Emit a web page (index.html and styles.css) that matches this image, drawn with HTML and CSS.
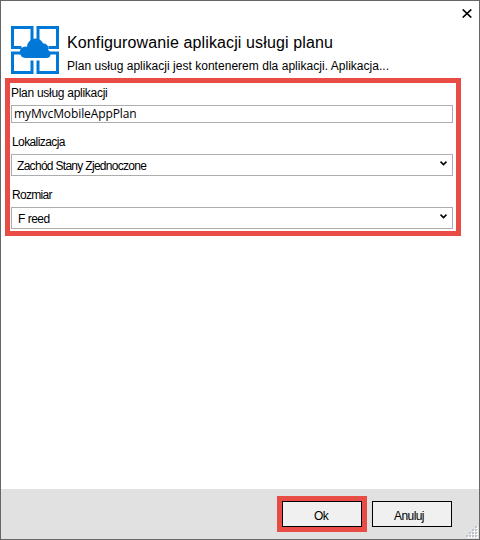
FILE: index.html
```html
<!DOCTYPE html>
<html lang="pl">
<head>
<meta charset="utf-8">
<title>Konfigurowanie aplikacji usługi planu</title>
<link rel="stylesheet" href="styles.css">
</head>
<body>
<main class="dialog">
  <button class="close" aria-label="Zamknij"><svg width="10" height="9" viewBox="0 0 10 9"><path d="M0.7 0.5 9.3 8.5M9.3 0.5 0.7 8.5"/></svg></button>
  <header class="header">
    <svg class="logo" width="48" height="48" viewBox="0 0 48 48">
      <path class="frame" d="M1.5 1.5H21V21.5H1.5ZM27 1.5H46.5V21.5H27ZM1.5 27H21V46.5H1.5ZM27 27H46.5V46.5H27Z"/>
      <path class="halo" d="M14 20H34V31H14Z"/>
      <g class="cloud"><circle cx="24.5" cy="21" r="8.5"/><circle cx="14.5" cy="26.200" r="5.8"/><circle cx="32.500" cy="22.500" r="5"/><circle cx="35.500" cy="28" r="4"/><path d="M14.500 23H35.500V32H14.500Z"/></g>
    </svg>
    <div class="heading">
      <h1>Konfigurowanie aplikacji usługi planu</h1>
      <p>Plan usług aplikacji jest kontenerem dla aplikacji. Aplikacja...</p>
    </div>
  </header>
  <section class="form">
    <div class="label label-plan"><span>Plan usług aplikacji</span></div>
    <div class="field input"><span>myMvcMobileAppPlan</span></div>
    <div class="label label-location"><span>Lokalizacja</span></div>
    <div class="field select"><span class="location">Zachód Stany Zjednoczone</span><svg width="7" height="5" viewBox="0 0 7 5"><path d="M0.5 0.7 3.5 3.6 6.5 0.7"/></svg></div>
    <div class="label label-size"><span>Rozmiar</span></div>
    <div class="field select"><span class="size">F reed</span><svg width="7" height="5" viewBox="0 0 7 5"><path d="M0.5 0.7 3.5 3.6 6.5 0.7"/></svg></div>
  </section>
  <footer class="footer">
    <div class="highlight"><button class="button ok">Ok</button></div>
    <button class="button cancel">Anuluj</button>
    <svg class="grip" width="12" height="12" viewBox="0 0 12 12">
      <path class="grip-light" d="M10 1h2v2h-2zM7 4h2v2h-2zM10 4h2v2h-2zM4 7h2v2h-2zM7 7h2v2h-2zM10 7h2v2h-2zM1 10h2v2h-2zM4 10h2v2h-2zM7 10h2v2h-2zM10 10h2v2h-2z"/>
      <path class="grip-dark" d="M9 0h2v2h-2zM6 3h2v2h-2zM9 3h2v2h-2zM3 6h2v2h-2zM6 6h2v2h-2zM9 6h2v2h-2zM0 9h2v2h-2zM3 9h2v2h-2zM6 9h2v2h-2zM9 9h2v2h-2z"/>
    </svg>
  </footer>
</main>
</body>
</html>
```
FILE: styles.css
```css
* { box-sizing: border-box; }
body { margin: 0; font: 12px/16px "Liberation Sans", Arial, sans-serif; color: #000; }
.dialog { position: relative; display: flex; flex-direction: column; width: 480px; height: 540px; border: 1px solid #666; background: #fff; }
button { font: inherit; color: inherit; padding: 0; }
.close { position: absolute; top: 8px; right: 7px; width: 10px; height: 9px; border: 0; background: none; display: flex; }
.close path { fill: none; stroke: #000; stroke-width: 1.7; }
.header { display: flex; gap: 8px; height: 77px; padding: 25px 0 0 10px; }
.logo { flex: none; }
.frame { fill: none; stroke: #0078d7; stroke-width: 3; }
.halo { fill: #fff; stroke: #fff; stroke-width: 7; }
.cloud { fill: #0078d7; }
.heading { white-space: nowrap; padding-top: 7px; }
h1 { margin: 0; font-size: 16px; line-height: 20px; font-weight: 400; letter-spacing: 0.12px; }
p { margin: 5px 0 0; font-size: 12px; line-height: 16px; letter-spacing: 0.03px; }
.form { width: 456px; height: 158px; margin-left: 4px; border: 5px solid #e94b45; padding: 0 3px 0 1px; display: flex; flex-direction: column; }
.label { white-space: nowrap; line-height: 16px; }
.label-plan { height: 22px; padding-top: 2px; letter-spacing: -0.28px; }
.label-location { height: 31px; padding: 11px 0 0 1px; letter-spacing: -0.6px; }
.label-size { height: 31px; padding: 11px 0 0 1px; letter-spacing: -0.7px; }
.field { display: flex; align-items: center; border: 1px solid #adadad; white-space: nowrap; }
.input { height: 18px; padding-left: 2px; font: 12px/16px "Open Sans", sans-serif; letter-spacing: -0.1px; }
.select { height: 22px; justify-content: space-between; padding: 1px 5px 0 5px; letter-spacing: -0.7px; }
.select svg { margin-top: -5px; }
.select path { fill: none; stroke: #000; stroke-width: 1.6; }
.size { padding-left: 1px; letter-spacing: -0.5px; }
.footer { position: relative; margin-top: auto; height: 50px; background: #e1e1e1; display: flex; justify-content: flex-end; align-items: flex-start; gap: 5px; padding: 7px 27px 0 0; }
.highlight { border: 5px solid #e94b45; height: 36px; }
.button { display: block; width: 80px; height: 26px; border: 1px solid #000; background: #f0f0f0; padding-top: 3px; letter-spacing: -0.6px; }
.cancel { margin-top: 5px; padding-right: 6px; }
.ok { padding-right: 2px; }
.grip { position: absolute; right: 1px; bottom: 1px; }
.grip-light { fill: #fff; }
.grip-dark { fill: #bcc3cf; }
```
